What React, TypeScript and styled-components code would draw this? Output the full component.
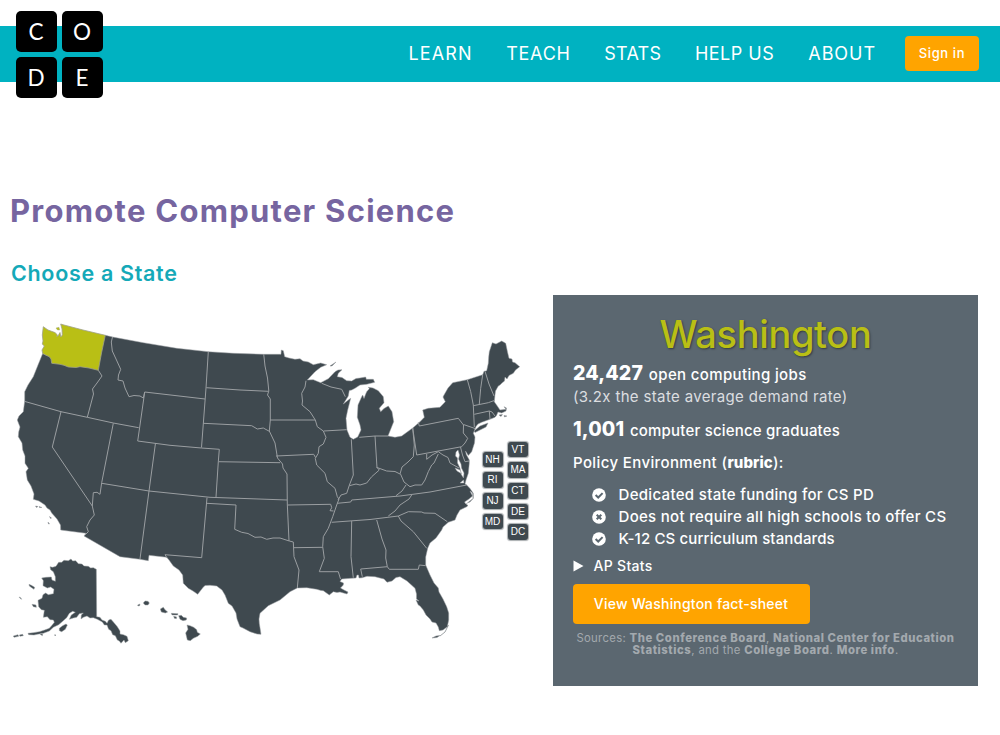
import React from 'react';
import styled, { createGlobalStyle } from 'styled-components';

const Global = createGlobalStyle`
  * { box-sizing: border-box; }
  body { margin: 0; background: #fff; font-family: Inter, "Liberation Sans", sans-serif; }
  h1, h2, h3, p, ul { margin: 0; padding: 0; font-weight: inherit; }
  a { color: inherit; text-decoration: none; }
`;

const Page = styled.div`
  width: 1000px;
  height: 735px;
  overflow: hidden;
  padding-top: 26px;
`;

const Header = styled.header`
  position: relative;
  display: flex;
  justify-content: flex-end;
  height: 55.5px;
  padding-right: 21px;
  background: #00b2c1;
`;

const Logo = styled.a`
  position: absolute;
  left: 15.5px;
  top: -15px;
  display: grid;
  grid-template-columns: 41px 41px;
  grid-auto-rows: 41px;
  gap: 5px;
`;

const LogoTile = styled.span`
  display: flex;
  align-items: center;
  justify-content: center;
  border-radius: 5px;
  background: #000;
  color: #fff;
  font: 400 22.5px/41px Lato, sans-serif;
`;

const Nav = styled.nav`
  display: flex;
  align-items: center;
`;

const NavLink = styled.a<{ $gap: number; $track: number }>`
  color: #fff;
  font-size: 18px;
  line-height: 24px;
  padding-top: 1px;
  white-space: nowrap;
  margin-right: ${(p) => p.$gap}px;
  letter-spacing: ${(p) => p.$track}px;
`;

const SignIn = styled.a`
  width: 74px;
  height: 35px;
  border-radius: 4px;
  background: #ffa400;
  color: #fff;
  text-align: center;
  font-size: 13px;
  font-weight: 500;
  line-height: 34px;
  letter-spacing: 0.6px;
`;

const Main = styled.main`
  padding: 109.5px 0 0 11px;
`;

const Title = styled.h1`
  color: #7665a0;
  font-size: 31px;
  font-weight: 700;
  line-height: 40px;
  letter-spacing: 1.26px;
  margin-left: -1px;
`;

const Subtitle = styled.h2`
  margin-top: 27px;
  color: #14a9b8;
  font-size: 21.5px;
  font-weight: 600;
  line-height: 30px;
  letter-spacing: 0.68px;
`;

const Columns = styled.div`
  display: flex;
  margin-top: 7px;
`;

const MapPane = styled.div`
  position: relative;
  width: 542px;
  height: 391px;
`;

const MapDrawing = styled.svg`
  display: block;
`;

const StateColumn = styled.div<{ $left: number; $top: number }>`
  position: absolute;
  left: ${(p) => p.$left}px;
  top: ${(p) => p.$top}px;
  display: flex;
  flex-direction: column;
  gap: 5px;
`;

const StateChip = styled.span`
  width: 20px;
  height: 15.7px;
  border-radius: 3px;
  background: #3f494f;
  box-shadow: 0 0 1px 0.5px #a9adb0;
  color: #fff;
  text-align: center;
  font: 10px/15.5px "Liberation Sans", sans-serif;
`;

const Panel = styled.section`
  width: 425px;
  height: 391px;
  padding: 15.5px 20px 0;
  background: #5b6770;
  color: #fff;
  font-size: 15px;
  font-weight: 500;
  line-height: 22px;
  white-space: nowrap;
`;

const StateName = styled.h3`
  margin-bottom: 7px;
  color: #b9bf15;
  text-align: center;
  font-size: 38px;
  font-weight: 500;
  line-height: 46px;
  letter-spacing: -0.35px;
  text-shadow: 1px 1px 2px #333b40;
`;

const Stat = styled.p<{ $track: number; $space?: number }>`
  letter-spacing: ${(p) => p.$track}px;
  margin-bottom: ${(p) => p.$space ?? 0}px;
`;

const Muted = styled(Stat)`
  color: #dcdee0;
  font-weight: 400;
`;

const Figure = styled.b`
  margin-right: 1.5px;
  font-size: 19.5px;
  font-weight: 800;
  line-height: 0;
  letter-spacing: 0.15px;
`;

const Rubric = styled.a`
  font-weight: 800;
  letter-spacing: 0.1px;
`;

const PolicyList = styled.ul`
  list-style: none;
  margin: 10px 0 5.5px;
  padding-left: 19px;
`;

const PolicyItem = styled.li<{ $track: number }>`
  display: flex;
  align-items: center;
  gap: 12.5px;
  letter-spacing: ${(p) => p.$track}px;
`;

const Disclosure = styled.div`
  display: flex;
  align-items: center;
  gap: 9.5px;
  font-size: 14px;
  line-height: 21px;
  letter-spacing: 0.3px;
`;

const FactSheet = styled.a`
  display: block;
  width: 237px;
  height: 40px;
  margin-top: 7.5px;
  margin-left: -0.5px;
  border-radius: 4px;
  background: #ffa400;
  text-align: center;
  font-size: 14px;
  line-height: 40px;
  letter-spacing: 0.2px;
`;

const Sources = styled.p`
  margin-top: 8.5px;
  color: #a3a9ae;
  text-align: center;
  font-size: 11.3px;
  font-weight: 400;
  line-height: 12px;
  letter-spacing: 0.32px;
`;

const SourceLink = styled.a`
  font-weight: 800;
  letter-spacing: 0.57px;
`;

const LAND =
  'M42.7 353.5L70 360L105.3 335.3L114 337.3L143.3 342.7L176.7 348.3L208.3 351.7L233.3 353.3L263.3 354.3L281 354.3L281.3 350L283.3 350.7L284.7 356.7L289 358L295 359.3L300 358.7L303 361L308.3 362L313.3 364.7L320.7 363L326.7 364.7L320.7 367.3L315 371.7L311 376L307.3 380L313.3 379.7L320.7 382.7L328.3 378.7L335 371.7L338 370L342 369.7L338.3 373.3L337.3 376.7L342 377.5L346.7 380.7L351.7 381L356 378.5L360 378L365.7 377L366.3 379.3L373.3 379.3L374.7 382.3L366.7 384.3L360 385L355 388.3L351.7 390L349.3 390.5L348.3 396L343.3 404L349 399.5L350.7 398.3L347.7 410L346 418.3L347 430L350 437.3L353.3 439.3L357.7 437L361 430L360 425L357.3 417.3L358 405L361.7 396.7L362.7 395L364 398.5L365.5 394.5L366.7 391.7L369.3 388.7L368.3 387.3L373 388L378.3 390.7L383.3 396.7L384 402.7L379.3 408.3L380.7 411.7L384 408.5L388.3 406L392 411.7L393.7 421.7L391.7 426.7L388 436L395 437.3L401.7 436L412.7 428L420 421.7L424.3 417.3L422.7 410L428.3 408.3L440 407.3L445.3 401.7L443 397L444 395L448 388L452.7 382.7L467.3 379.7L482.7 374.7L484 371.3L486.7 370.7L488.3 363.3L488.7 357L489.3 351.7L492.3 342.7L496 344L501.7 341L505.7 343.3L507.5 352L509 358.3L512 359L512.5 362L515 362.7L519.7 366.7L515.5 370L513.3 373.3L509 375.5L507 379L505 377L504.5 381L502 383L500 385L498.3 386L495.5 391L495 395L494.3 401.7L497.3 406L500 410L506 409.3L504 406.7L506.5 408L506 411L501.7 413L498 412L496.5 415.5L495 417.3L490 419.3L481.7 422.3L478 424L476 426.5L473.3 433.3L475 437L474.5 443L471.7 451.7L468.3 455.5L465.5 451L466.3 454.5L469.3 460L469.3 463.3L468.3 473.3L466 480L465 484L466.7 485L470 488.5L473.3 493.3L473.3 498.3L470 502L465.5 503.5L468 505.5L466.7 506.7L460 510L457 515L455 520L448.3 522.3L443 527L441.7 530L436 538L430 543L427.7 548.3L425.7 557L425.7 565L430 575L434 583L438.3 588L439 592L443 599L446.7 606.7L448.7 613L448.7 620L447.3 626.7L443 630L439.3 630.7L438.3 627L436 623L432 622L430 619L426 615L423.3 610L420 606L418.3 605L416 600L419 601L416.5 599L416.5 594L415 588.3L407 581L400 576.7L396 577.5L392 581L387 582.3L384 579L375 576.7L367 576.3L362 577.8L359 578L358.5 575L357 575L356 578L351 578.3L341.7 579L340 581.5L343.5 583L343.3 585L340.5 588L344 590L348 592L347 594L340 592L337 592.5L333.3 591.7L329.3 595L323.3 590.7L321 590.5L316.7 589.3L306.7 587.7L297.3 588L290 591.7L280 600L268.3 605.7L260 613.3L259 619L259.3 623.3L261 634.3L257 634L250 631.7L243 628L240 626.7L237 619L236 613L232 606L228.3 603.3L225 595L222 590L216.7 586L210 585.3L205 585.5L203 587.5L197.7 594.3L193 591L188.3 588.3L183.3 583.3L182.7 575L179 570L173.3 566L169 560L166.7 557.3L149 555.3L148.3 560.7L140 559.3L120 556.7L84 536L86 533.3L60.7 530L60.5 525L57 519L51.7 513L50 510L47 508L45 505L39 501L33.3 499.3L34 494L31 486L27.3 480L26 471.7L28.3 468.3L25 463.3L25 456L22.7 450L22 443L18.3 436.7L18.7 432L20 427L17.3 420L19 416L23.3 411.7L24.7 401L24.7 391.7L28 385L33.3 376.7L38 365Z';

const WASHINGTON =
  'M43.3 326.7L48 330L55 332.6L57.5 335L56.5 336.2L58 336L60 332.5L60.8 337L62.3 335L62 329L60.7 324L64 325L83 330L105.3 335.3L101.5 353L98.3 370.3L89 368L80 366.7L76 367.5L68.3 367L64 365.3L60 364.3L51.7 363.3L51 359L49.3 356.7L46 355.3L42.7 353.5L42 350L44.3 346L42.3 344L43 341L42.3 335Z';

const BORDERS = [
  'M98.3 370.3L102 376L97 383L92.5 389L93.5 394L87.3 417.3',
  'M25 401.5L61 411.7L87.3 417.3L113.3 423L138.7 427.7',
  'M112.5 337L111.3 342L112.3 351L116 359L120.7 369.3L118.5 375L118 380L123 381L125 388L129 396.7L134 395.5L140 396L143.3 398L144.7 392',
  'M137.7 441L141 418L144.7 392L205 399',
  'M137.7 441L170 445.3L201.5 448L219.3 449.3L218.3 461.7L216 497',
  'M208.3 351.7L206 388L201.5 447.5',
  'M206.3 387.7L240 390L268.3 391.3',
  'M203.3 423.3L251.7 425.7L257.3 429L263.3 428L269.3 431.3',
  'M263.7 354L265 366L267.5 378L268.8 391L267.5 395L270.3 399L270.3 420L269.3 431L275 443L277.5 458L282.5 464L283 468L287 474L287.3 504L289 541',
  'M270 420L315 420',
  'M276 456L313.7 454.3L315.5 457.5',
  'M218.3 461.7L280 462.7',
  'M101.7 483.3L149 491L210 497.3L287 500',
  'M113.3 423.3L101.7 482.7L100 494.3L97 492.3L93.3 492.7L92.3 506L94.3 515L90 520L86.7 526.7L88.3 531.7L84 536',
  'M61 411.7L52.3 447L92.3 506',
  'M155.5 443L149 491L140 559',
  'M207 497.7L201.7 557.7L165 554.7L167 558',
  'M206.7 503.3L236 505L234.7 529.3L241.7 532.3L248 533.5L255 537.3L261 537L266.7 539.3L273 538L280 538L289.3 541L293.3 542L294 556.7L299 570L297.3 588',
  'M287.7 505L330.7 504.3L331.7 507.7L330 510.7L333.5 511',
  'M294 547.7L322.7 547.3',
  'M306 380.7L305 387L301.7 393.3L302.5 401L302 405L310 411.7L315.3 420L317.3 426.7L323.3 431L326 437.3L323.3 444L319 446.7L318.3 453.3L315.3 458.3L316.7 465L325 473.3L327.3 481.7L335 488.3L337.3 496.7L339 499L336.7 505L332.7 516.7L328.3 528.3L323.3 536.7L322.7 546.7L324.3 558.3L319.3 571.7L338.3 571.7L340.5 579',
  'M321.7 383.3L331 387L341.7 389.3L345.3 396.7',
  'M323.7 431L346.7 429.7',
  'M351.3 439.3L353.3 475L349.3 485.3L346.7 493.3L341 495L338 500',
  'M349.3 485.7L356 484L360 485L366.7 483L371.7 476.7L379.3 470L377 467.5L386.7 471L395 471.5L400 474L402 467L408 462L413.3 456.7L414.3 445L412.7 428',
  'M359.3 437.3L375 436L388 436',
  'M375 436L377 468',
  'M412.7 428L416.7 455L461.7 446.7L465 443L467.7 438.3L463.3 433L463.5 425L458.3 418.3L419.3 426L418.3 422.3',
  'M463.5 424.5L475 428.5',
  'M467.3 379.7L470.7 391.7L473.3 405L474.3 427',
  'M482.7 374.7L480.7 388.3L479.3 404',
  'M485 371.3L489 384L494 396',
  'M473.3 405.7L488.3 402.7L494.3 400.5',
  'M474.3 414.3L489.3 411L492 412L495 416',
  'M489.3 411L490 419',
  'M426.7 454L426.7 459.3L432 455L438.3 451.7L443 455L448 457.5L450 463L459 468',
  'M438.3 454L434 463L431.7 465L428.3 471.7L425 480L421.7 485L415 485L410 486.7L404 482L400.5 474',
  'M460.5 447L462.5 455L465 461.7L469 461',
  'M406 485L402 491L396 495.7',
  'M337.3 503.3L350.7 502L351.7 500L400 496L430 492L466.7 485',
  'M411.7 495L409 499L400 505L395 511L388.3 516',
  'M331.7 522.3L370 519.5L398.3 516L408.3 511.7L421.7 512L424 513L435 513.3L447.3 521.7',
  'M398.3 516L401 521L413.3 531.7L420 540L426.7 548.3',
  'M351.7 521L351 556.7L353.3 577.7',
  'M376.7 520L382 539L386 550L385.7 558L387.3 566.7',
  'M362.3 576.7L360.7 569L387.3 566.7L389.3 569.3L418.3 569.3L419.3 565L425.7 565.7',
].join('');

const WATERS = [
  'M456 452L458 450L459.5 455L458.5 459L461 464L461.5 468L464 473L463.5 478L461 474L460 468L457.5 463L457.5 458L455.5 456Z',
  'M455 468L460 470L462 474L457 471Z',
  'M460 483L463.5 480L464 483Z',
  'M470 491L472.5 496L469 499L464.5 502L466 504L473 498.5L472.5 493Z',
].join('');

const ISLANDS = [
  'M330 366L336 362L332 366Z',
  'M474 431L480 426L488 423L486 427L480 430L475 432.5Z',
  'M499 415L502.5 414.5L501 416.5ZM504 415.5L507 416L504.5 417Z',
  'M35.5 506L38 506.5L36.5 507.5ZM39 506.5L42 507.5L39.5 507.5ZM49.5 516.5L51.5 518L50.5 518.5ZM48 522L49.5 524L48.5 524Z',
  'M432 638L436 636L440 635.5L437 637.5Z',
].join('');

const KEYS = 'M440 636L445 632L448.5 625';

const ALASKA =
  'M120 320L128 322L138 319L146 307L155 307L162 301L175 302L183 297L188 303L197 302L205 311L216 312L222 318L235 319L242 324L250 323L259 328L260 470L270 472L276 480L286 484L291 490L296 480L303 478L312 488L322 500L330 513L330 522L340 524L351 529L355 542L346 548L342 540L333 550L328 543L322 540L316 527L308 524L303 512L296 508L291 495L283 495L277 486L262 478L250 473L240 474L231 468L220 472L213 477L214 465L220 459L208 461L200 472L190 474L178 478L184 465L196 457L188 454L178 460L170 473L158 484L146 494L130 502L118 513L100 520L82 523L72 525L56 524L54 520L70 518L88 515L104 510L118 505L126 496L133 487L130 480L120 479L112 470L100 472L103 451L94 449L86 440L84 421L96 415L99 404L107 399L115 404L130 401L132 388L122 381L112 384L99 377L100 362L95 354L108 352L124 351L126 360L136 364L136 350L130 335L122 329Z';

const ALASKA_ISLANDS =
  'M148 505L158 497L168 492L172 495L166 508L155 515L148 512ZM57 373L64 376L74 382L72 388L65 383L58 378ZM66 433L78 435L79 442L70 440ZM27 411L32 413L35 418L30 415ZM10 528L24 524L26 529L12 532ZM28 525L38 523L40 527L30 529ZM90 522L98 522L97 527ZM134 524L138 525L135 528Z';

const HAWAII =
  'M383 435L390 432L389 437L384 438ZM401 427L406 423L414 424L418 429L414 435L406 435L401 431ZM451 447L460 442L465 449L473 456L466 459L454 456ZM484 460L504 461L503 465L486 465ZM491 469L500 471L499 476L493 475ZM506 467L514 466L520 472L530 474L529 480L519 482L510 478ZM531 495L540 497L551 502L560 509L562 517L571 522L563 529L550 535L541 542L532 540L527 519L534 508Z';

function UnitedStates() {
  return (
    <MapDrawing width="542" height="391" viewBox="11 295 542 391">
      <g stroke="#9a9fa2" strokeWidth="0.5" strokeLinejoin="round">
        <path d={LAND} fill="#3f494f" />
        <path d={ISLANDS} fill="#3f494f" />
        <path d={WATERS} fill="#fff" />
        <path d={KEYS} fill="none" stroke="#3f494f" />
        <g transform="translate(10 460) scale(.33333)" fill="#3f494f" strokeWidth="1.5">
          <path d={ALASKA} />
          <path d={ALASKA_ISLANDS} />
          <path d={HAWAII} />
        </g>
      </g>
      <path d={BORDERS} fill="none" stroke="#9a9ea1" strokeWidth="1" strokeLinejoin="round" />
      <path d={WASHINGTON} fill="#b9bf15" stroke="#a0a18c" strokeWidth="0.8" />
      <path d="M56 328L59 327.3L59.7 330L57.5 330Z" fill="#b9bf15" stroke="#a0a18c" strokeWidth="0.4" />
    </MapDrawing>
  );
}

function StatusIcon({ ok }: { ok: boolean }) {
  return (
    <svg width="14" height="14" viewBox="0 0 14 14">
      <circle cx="7" cy="7" r="6.8" fill="#fff" />
      <path
        d={ok ? 'M3.6 7L6.2 9.5L10.6 5.1' : 'M4.7 4.7L9.3 9.3M9.3 4.7L4.7 9.3'}
        fill="none"
        stroke="#5b6770"
        strokeWidth="2"
      />
    </svg>
  );
}

const LINKS = [
  { label: 'LEARN', gap: 33.5, track: 1.1 },
  { label: 'TEACH', gap: 33.5, track: 0.75 },
  { label: 'STATS', gap: 33.5, track: 0.3 },
  { label: 'HELP US', gap: 34, track: 0.5 },
  { label: 'ABOUT', gap: 29, track: 0.95 },
];

const POLICIES = [
  { text: 'Dedicated state funding for CS PD', ok: true, track: 0.32 },
  { text: 'Does not require all high schools to offer CS', ok: false, track: 0.3 },
  { text: 'K-12 CS curriculum standards', ok: true, track: 0.13 },
];

export default function App() {
  return (
    <Page>
      <Global />
      <Header>
        <Logo href="#">
          {['C', 'O', 'D', 'E'].map((letter) => (
            <LogoTile key={letter}>{letter}</LogoTile>
          ))}
        </Logo>
        <Nav>
          {LINKS.map((l) => (
            <NavLink key={l.label} href="#" $gap={l.gap} $track={l.track}>
              {l.label}
            </NavLink>
          ))}
          <SignIn href="#">Sign in</SignIn>
        </Nav>
      </Header>
      <Main>
        <Title>Promote Computer Science</Title>
        <Subtitle>Choose a State</Subtitle>
        <Columns>
          <MapPane>
            <UnitedStates />
            <StateColumn $left={471.5} $top={156.5}>
              {['NH', 'RI', 'NJ', 'MD'].map((s) => (
                <StateChip key={s}>{s}</StateChip>
              ))}
            </StateColumn>
            <StateColumn $left={497} $top={146.5}>
              {['VT', 'MA', 'CT', 'DE', 'DC'].map((s) => (
                <StateChip key={s}>{s}</StateChip>
              ))}
            </StateColumn>
          </MapPane>
          <Panel>
            <StateName>Washington</StateName>
            <Stat $track={0.36}>
              <Figure>24,427</Figure> open computing jobs
            </Stat>
            <Muted $track={0.35} $space={12}>
              (3.2x the state average demand rate)
            </Muted>
            <Stat $track={0.2} $space={10}>
              <Figure>1,001</Figure> computer science graduates
            </Stat>
            <Stat $track={0.38}>
              Policy Environment (<Rubric href="#">rubric</Rubric>):
            </Stat>
            <PolicyList>
              {POLICIES.map((p) => (
                <PolicyItem key={p.text} $track={p.track}>
                  <StatusIcon ok={p.ok} />
                  {p.text}
                </PolicyItem>
              ))}
            </PolicyList>
            <Disclosure>
              <svg width="11" height="12" viewBox="0 0 11 12">
                <path d="M0.5 0.5L10.5 6L0.5 11.5Z" fill="#fff" />
              </svg>
              AP Stats
            </Disclosure>
            <FactSheet href="#">View Washington fact-sheet</FactSheet>
            <Sources>
              Sources: <SourceLink href="#">The Conference Board</SourceLink>,{' '}
              <SourceLink href="#">National Center for Education</SourceLink>
              <br />
              <SourceLink href="#">Statistics</SourceLink>, and the <SourceLink href="#">College Board</SourceLink>.{' '}
              <SourceLink href="#">More info</SourceLink>.
            </Sources>
          </Panel>
        </Columns>
      </Main>
    </Page>
  );
}
